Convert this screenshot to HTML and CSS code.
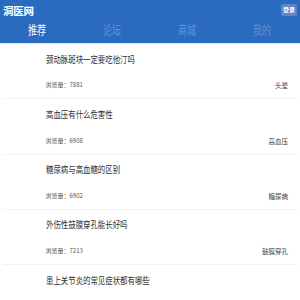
FILE: index.html
```html
<!DOCTYPE html>
<html>
<head>
<meta charset="utf-8">
<link rel="stylesheet" href="styles.css">
</head>
<body>
<header class="header">
  <div class="top">
    <span class="logo">洞医网</span>
    <span class="login">登录</span>
  </div>
  <nav class="tabs">
    <span class="tab active"><span class="tab-text">推荐</span></span>
    <span class="tab"><span class="tab-text">论坛</span></span>
    <span class="tab"><span class="tab-text">商城</span></span>
    <span class="tab"><span class="tab-text">我的</span></span>
  </nav>
</header>
<div class="bar"></div>
<ul class="list">
  <li class="item">
    <div class="title"><span class="title-text">颈动脉斑块一定要吃他汀吗</span></div>
    <div class="meta"><span>浏览量：7881</span><span class="tag">头晕</span></div>
  </li>
  <li class="item">
    <div class="title"><span class="title-text">高血压有什么危害性</span></div>
    <div class="meta"><span>浏览量：6908</span><span class="tag">高血压</span></div>
  </li>
  <li class="item">
    <div class="title"><span class="title-text">糖尿病与高血糖的区别</span></div>
    <div class="meta"><span>浏览量：6902</span><span class="tag">糖尿病</span></div>
  </li>
  <li class="item">
    <div class="title"><span class="title-text">外伤性鼓膜穿孔能长好吗</span></div>
    <div class="meta"><span>浏览量：7213</span><span class="tag">鼓膜穿孔</span></div>
  </li>
  <li class="item">
    <div class="title"><span class="title-text">患上关节炎的常见症状都有哪些</span></div>
  </li>
</ul>
</body>
</html>
```
FILE: styles.css
```css
* { box-sizing: border-box; }
html, body { margin: 0; padding: 0; }
body {
  font-family: "Noto Sans CJK SC", "Liberation Sans", sans-serif;
  background: #fff;
  width: 300px;
  height: 300px;
  overflow: hidden;
}
.header {
  background: #2a6bbf;
  height: 43px;
  display: flex;
  flex-direction: column;
}
.top {
  display: flex;
  justify-content: space-between;
  align-items: flex-start;
  padding: 3px 3px 0 3px;
  height: 20px;
}
.logo {
  color: #fff;
  font-size: 10.5px;
  font-weight: bold;
  line-height: 15px;
  letter-spacing: -0.3px;
}
.login {
  margin-top: 1px;
  width: 16px;
  height: 12px;
  background: #5d86c4;
  color: #fff;
  font-size: 6px;
  font-weight: bold;
  line-height: 12px;
  text-align: center;
  border-radius: 2px;
}
.tabs {
  display: grid;
  grid-template-columns: repeat(4, 1fr);
}
.tab {
  text-align: center;
  color: #5e93d6;
  font-size: 12px;
  line-height: 20px;
}
.tab-text {
  display: inline-block;
  transform: scaleX(0.76);
}
.tab.active { color: #fff; }
.bar {
  height: 1px;
  background: #dde7f5;
}
.list {
  list-style: none;
  margin: 0;
  padding: 0;
}
.item {
  margin: 0 3px;
  height: 55.33px;
  border-bottom: 1px solid #f2f2f2;
  padding: 8.5px 9px 0 42.5px;
}
.title {
  font-size: 9.5px;
  line-height: 12px;
  color: #333;
  white-space: nowrap;
}
.title-text {
  display: inline-block;
  transform: scaleX(0.78);
  transform-origin: left center;
}
.meta {
  margin-top: 16.8px;
  display: flex;
  justify-content: space-between;
  align-items: center;
  font-size: 6px;
  line-height: 8px;
  color: #555;
}
.tag {
  font-size: 6.5px;
  color: #444;
}
```
